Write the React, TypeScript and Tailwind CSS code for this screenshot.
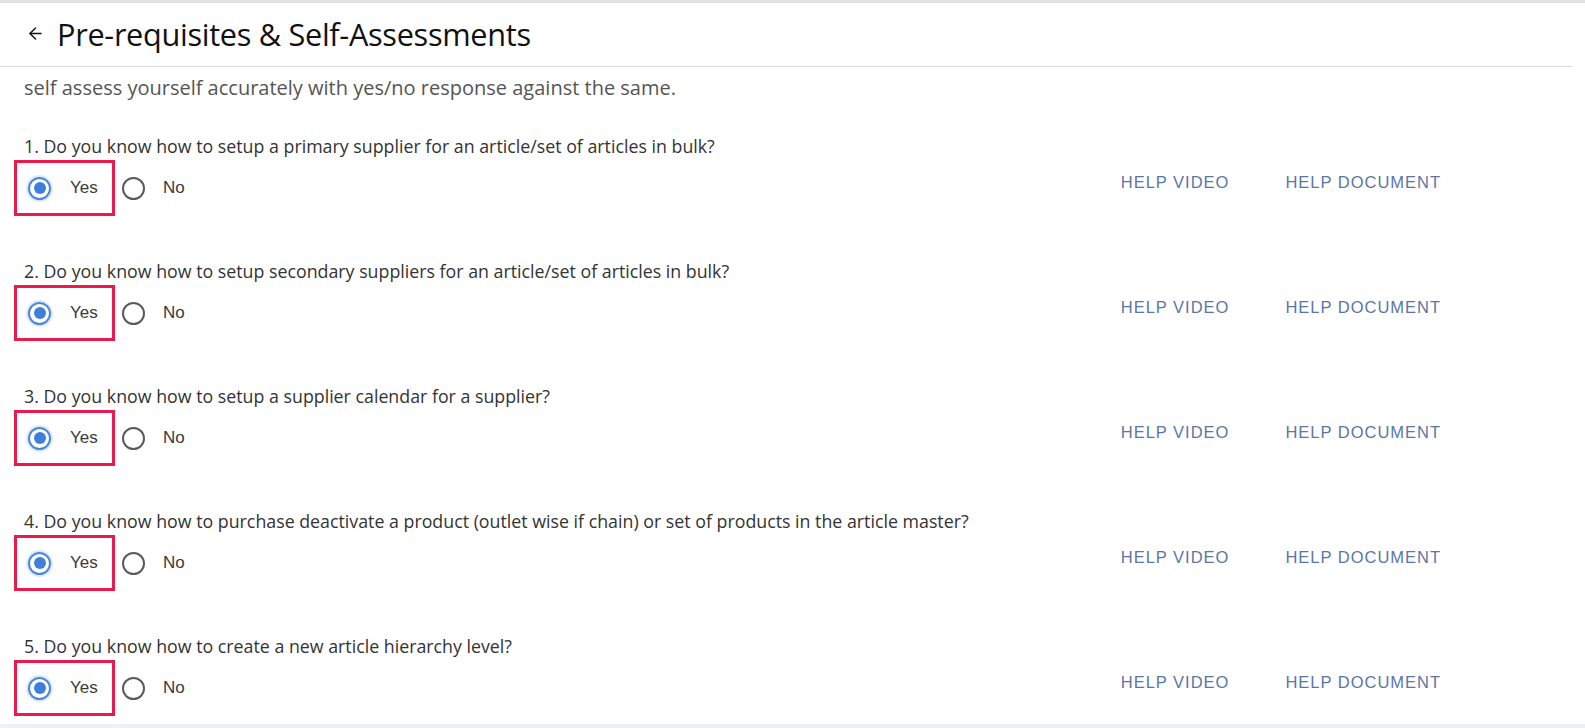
import React from 'react';
import { ArrowLeft } from 'lucide-react';

const questions = [
  'Do you know how to setup a primary supplier for an article/set of articles in bulk?',
  'Do you know how to setup secondary suppliers for an article/set of articles in bulk?',
  'Do you know how to setup a supplier calendar for a supplier?',
  'Do you know how to purchase deactivate a product (outlet wise if chain) or set of products in the article master?',
  'Do you know how to create a new article hierarchy level?',
];

const arial = { fontFamily: '"Liberation Sans", Arial, sans-serif' };

function Radio({ checked }: { checked: boolean }) {
  return checked ? (
    <span className="w-[23px] h-[23px] shrink-0 rounded-full border-2 border-[#4a86dc] flex items-center justify-center shadow-[0_0_0_2px_rgba(74,134,220,0.18)]">
      <span className="w-[12px] h-[12px] rounded-full bg-[#3f7fd9]" />
    </span>
  ) : (
    <span className="w-[23px] h-[23px] shrink-0 rounded-full border-2 border-[#5a5a5a]" />
  );
}

function QuestionBlock({ index, text }: { index: number; text: string }) {
  return (
    <div className="h-[125px]">
      <p className="text-[17.8px] leading-[20px] text-[#333]">
        {index}. {text}
      </p>
      <div className="flex items-center mt-[4px]">
        <label className="flex items-center h-[56px] w-[101px] border-[3px] border-[#ea1a4c] pl-[11px] gap-[19px] -ml-[10px]">
          <Radio checked />
          <span className="text-[17px] text-[#3a3a3a]" style={arial}>Yes</span>
        </label>
        <label className="flex items-center ml-[7px] gap-[18px]">
          <Radio checked={false} />
          <span className="text-[17px] text-[#3a3a3a]" style={arial}>No</span>
        </label>
        <div
          className="ml-auto mr-[144px] mb-[12px] flex items-center gap-[56px] text-[16.5px] tracking-[0.06em] text-[#5b76a6]"
          style={arial}>
          <span>HELP VIDEO</span>
          <span>HELP DOCUMENT</span>
        </div>
      </div>
    </div>);

}

export default function App() {
  return (
    <div
      className="w-[1585px] h-[728px] bg-white border-t-[3px] border-[#e2e2e2] border-b-[4px] border-b-[#eef0f3] overflow-hidden"
      style={{ fontFamily: '"Open Sans", "Noto Sans", sans-serif' }}>
      <div className="h-[64px] flex items-center pl-[26px] mr-[13px] border-b border-[#d6d6d6]">
        <ArrowLeft size={19} strokeWidth={1.8} className="text-[#111] mr-[12px] -mt-[2px]" />
        <h1 className="text-[30.7px] text-[#111] leading-none tracking-[-0.01em]">
          Pre-requisites &amp; Self-Assessments
        </h1>
      </div>
      <div className="pl-[24px]">
        <p className="text-[20px] leading-[24px] text-[#555] mt-[9px]">
          self assess yourself accurately with yes/no response against the same.
        </p>
        <div className="mt-[36px]">
          {questions.map((q, i) =>
          <QuestionBlock key={i} index={i + 1} text={q} />
          )}
        </div>
      </div>
    </div>);

}
